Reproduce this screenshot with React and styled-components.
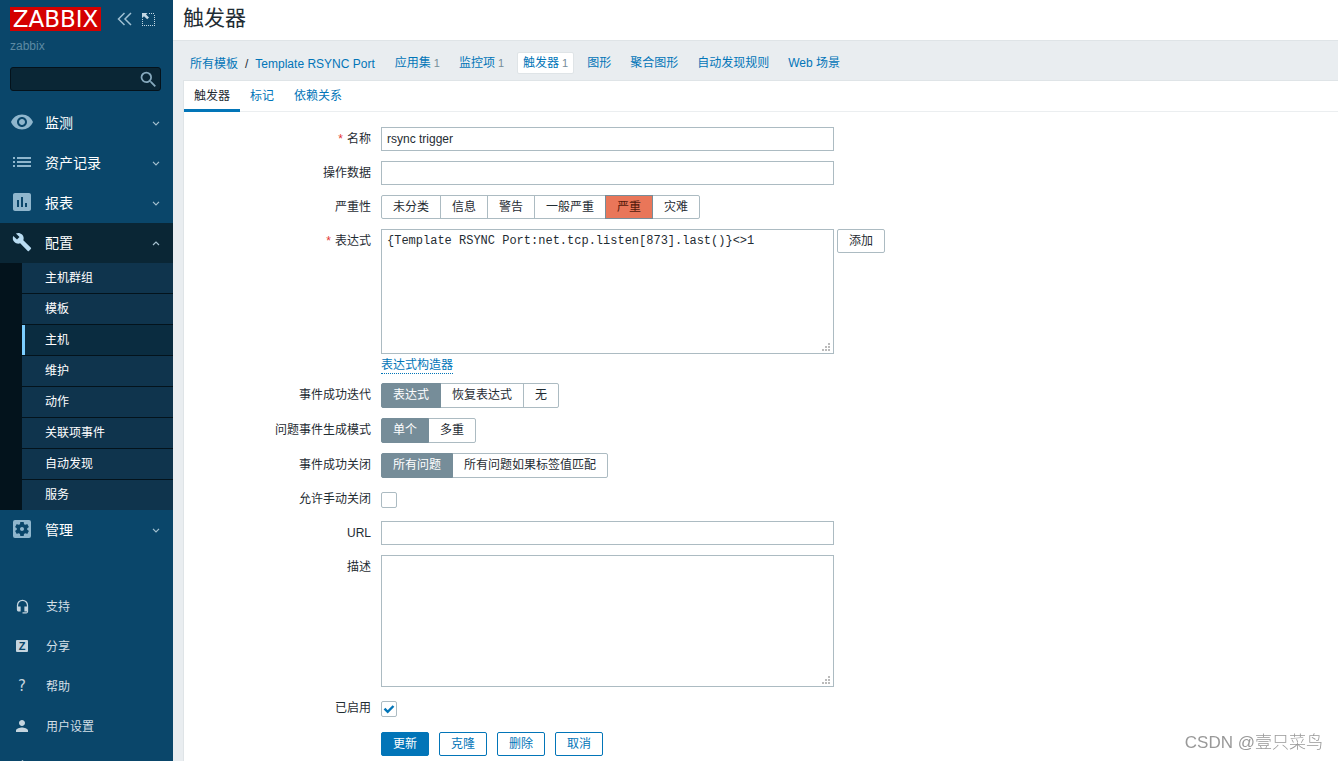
// App.jsx
import React, { useState } from 'react';
import styled, { createGlobalStyle } from 'styled-components';
import {
  MdAssessment,
  MdBuild,
  MdHeadsetMic,
  MdPerson,
  MdPowerSettingsNew,
  MdSearch,
  MdSettingsApplications,
  MdVisibility,
} from 'react-icons/md';

const GlobalStyle = createGlobalStyle`
  *, *::before, *::after {
    box-sizing: border-box;
  }

  body {
    margin: 0;
    background: #e9edf0;
    color: #1f2c33;
    font: 12px/16px "Liberation Sans", "Noto Sans CJK SC", sans-serif;
  }

  button, input, textarea {
    font: inherit;
    color: inherit;
  }

  a {
    color: #0275b8;
    text-decoration: none;
  }
`;

const Page = styled.div`
  display: flex;
  min-height: 100vh;
`;

/* Sidebar */

const Sidebar = styled.aside`
  position: sticky;
  top: 0;
  flex: 0 0 173px;
  height: 100vh;
  overflow: hidden;
  background: #0a466a;
`;

const SidebarHeader = styled.div`
  display: flex;
  align-items: center;
  padding: 7px 0 0 10px;
`;

const Logo = styled.a`
  flex: none;
  width: 91px;
  height: 24px;
  margin-right: 16px;
  background: #d40000;
  color: #fff;
  font: 23px/24px "DejaVu Sans", sans-serif;
  text-align: center;
`;

const HeaderButton = styled.button`
  display: flex;
  padding: 0;
  margin-right: 10px;
  border: none;
  background: none;
  color: #9fc0d3;
  cursor: pointer;
`;

const ServerName = styled.div`
  padding: 7px 10px 13px;
  color: #5d8aa3;
`;

const SearchForm = styled.form`
  display: flex;
  align-items: center;
  height: 24px;
  margin: 0 12px 12px 10px;
  border: 1px solid #04121b;
  border-radius: 3px;
  background: #0a2635;
`;

const SearchInput = styled.input`
  flex: 1;
  min-width: 0;
  padding: 0 5px;
  border: none;
  outline: none;
  background: transparent;
  color: #fff;
`;

const SearchButton = styled.button`
  display: flex;
  padding: 0 1px 0 0;
  border: none;
  background: none;
  color: #86a9bd;
  cursor: pointer;
`;

const MenuLink = styled.a`
  display: flex;
  align-items: center;
  gap: ${(props) => (props.$small ? '12px' : '11px')};
  height: 40px;
  padding: ${(props) => (props.$small ? '2px' : '0')} 13px 0 10px;
  background: ${(props) => (props.$open ? '#0a2635' : 'transparent')};
  color: ${(props) => (props.$small ? '#d3dfe6' : '#fff')};
  font-size: ${(props) => (props.$small ? '12px' : '14px')};
`;

const MenuIcon = styled.span`
  display: flex;
  justify-content: center;
  width: 24px;
  padding-bottom: 2px;
  color: ${(props) => (props.$bright ? '#b9dcf2' : '#8fb6cd')};
`;

const MenuText = styled.span`
  flex: 1;
`;

const SubMenu = styled.ul`
  margin: 0;
  padding: 0 0 0 22px;
  list-style: none;
  background: #03131c;
`;

const SubMenuLink = styled.a`
  display: block;
  height: 30px;
  padding-left: 20px;
  border-left: 3px solid ${(props) => (props.$active ? '#7cceff' : 'transparent')};
  background: ${(props) => (props.$active ? '#0a2c40' : '#0f344d')};
  color: #fff;
  line-height: 30px;

  li + li > & {
    margin-top: 1px;
  }
`;

const UserMenu = styled.nav`
  padding-top: 36px;
`;

const SmallIcon = styled(MenuIcon)`
  color: #c5d5df;
`;

const ShareBadge = styled.span`
  width: 12px;
  height: 12px;
  border-radius: 1px;
  background: #c5d5df;
  color: #0a466a;
  font: bold 11px/12px "Liberation Sans", sans-serif;
  text-align: center;
`;

const HelpMark = styled.span`
  font: 15px/16px "DejaVu Sans", sans-serif;
`;

/* Content */

const Main = styled.main`
  display: flex;
  flex: 1;
  flex-direction: column;
  min-width: 0;
`;

const PageHeader = styled.header`
  height: 41px;
  padding-left: 10px;
  border-bottom: 1px solid #dfe4e7;
  background: #fff;
`;

const PageTitle = styled.h1`
  margin: 0;
  font-size: 21px;
  font-weight: normal;
  line-height: 36px;
`;

const Breadcrumbs = styled.nav`
  display: flex;
  align-items: center;
  flex-wrap: wrap;
  gap: 7px;
  min-height: 39px;
  padding: 4px 10px 0 11px;
`;

const Crumb = styled.a`
  padding: 1px 5px;
  border: 1px solid ${(props) => (props.$active ? '#dfe4e7' : 'transparent')};
  border-radius: 2px;
  background: ${(props) => (props.$active ? '#fff' : 'transparent')};
  line-height: 18px;
`;

const Path = styled.span`
  display: flex;
  align-items: center;
  padding: 2px 7px 0 6px;
  gap: 7px;
`;

const Count = styled.span`
  margin-left: 3px;
  color: #768d99;
  font-size: 11px;
`;

const Card = styled.section`
  flex: 1;
  margin-left: 10px;
  border: 1px solid #dfe4e7;
  border-width: 1px 0 0 1px;
  background: #fff;
`;

const Tabs = styled.div`
  display: flex;
  height: 31px;
  border-bottom: 1px solid #ebeef0;
`;

const Tab = styled.button`
  height: 31px;
  padding: 2px 10px 0;
  border: none;
  border-bottom: 3px solid ${(props) => (props.$active ? '#0275b8' : 'transparent')};
  background: none;
  color: ${(props) => (props.$active ? '#1f2c33' : '#0275b8')};
  line-height: 26px;
  cursor: pointer;
`;

const Form = styled.form`
  display: flex;
  flex-direction: column;
  gap: 10px;
  padding: 15px 0 5px;
`;

const Row = styled.div`
  display: grid;
  grid-template-columns: 187px 1fr;
  gap: 10px;
`;

const FieldLabel = styled.label`
  line-height: 24px;
  text-align: right;
`;

const CheckLabel = styled(FieldLabel)`
  line-height: 23px;
`;

const Required = styled.span`
  margin-right: 4px;
  color: #e33734;
`;

const TextInput = styled.input`
  width: 453px;
  max-width: 100%;
  height: 24px;
  padding: 0 5px;
  border: 1px solid #acbbc2;
  outline: none;
  background: #fff;
`;

const AreaBox = styled.div`
  position: relative;
  width: 453px;
  max-width: 100%;
`;

const Area = styled.textarea`
  display: block;
  width: 100%;
  height: ${(props) => (props.$mono ? '125px' : '132px')};
  padding: 4px 5px;
  border: 1px solid #acbbc2;
  outline: none;
  background: #fff;
  font-family: ${(props) => (props.$mono ? '"Liberation Mono", monospace' : 'inherit')};
  line-height: 14px;
  resize: none;
`;

const Grip = styled.svg`
  position: absolute;
  right: 4px;
  bottom: 3px;
  pointer-events: none;
`;

const Inline = styled.div`
  display: flex;
  align-items: flex-start;
  gap: 3px;
`;

const BuilderLine = styled.div`
  height: 19px;
  padding-top: 3px;
`;

const DottedLink = styled.a`
  display: inline-block;
  border-bottom: 1px dotted #0275b8;
  line-height: 15px;
`;

const Segments = styled.div`
  display: flex;
`;

const Segment = styled.label`
  height: ${(props) => (props.$severity ? '24px' : '25px')};
  padding: 0 11px;
  border: 1px solid #acbbc2;
  line-height: 22px;
  white-space: nowrap;
  cursor: pointer;

  & + & {
    margin-left: -1px;
  }

  &:first-child {
    border-radius: 2px 0 0 2px;
  }

  &:last-child {
    border-radius: 0 2px 2px 0;
  }

  &:has(input:checked) {
    z-index: 1;
    border-color: #768d99;
    background: ${(props) => (props.$severity ? '#e97659' : '#768d99')};
    color: ${(props) => (props.$severity ? '#52190b' : '#fff')};
  }
`;

const HiddenRadio = styled.input`
  position: absolute;
  opacity: 0;
  pointer-events: none;
`;

const CheckBox = styled.span`
  display: grid;
  width: 16px;
  height: 23px;
  align-items: center;
`;

const CheckInput = styled.input`
  grid-area: 1 / 1;
  width: 16px;
  height: 16px;
  margin: 0;
  border: 1px solid #acbbc2;
  border-radius: 2px;
  background: #fff;
  appearance: none;

  & + svg {
    grid-area: 1 / 1;
    z-index: 1;
    visibility: hidden;
    pointer-events: none;
  }

  &:checked + svg {
    visibility: visible;
  }
`;

const Button = styled.button`
  height: 24px;
  padding: 0 11px;
  border: 1px solid ${(props) => (props.$plain ? '#acbbc2' : '#0275b8')};
  border-radius: 2px;
  background: ${(props) => (props.$primary ? '#0275b8' : '#fff')};
  color: ${(props) => (props.$primary ? '#fff' : props.$plain ? '#1f2c33' : '#0275b8')};
  line-height: 22px;
  white-space: nowrap;
  cursor: pointer;
`;

const Actions = styled.div`
  display: flex;
  gap: 10px;
  padding-top: 2px;
`;

const Watermark = styled.div`
  position: fixed;
  right: 15px;
  bottom: 6px;
  color: #999;
  font-size: 17px;
  font-weight: 300;
  line-height: 24px;
  pointer-events: none;
`;

const ListIcon = () => (
  <svg width="18" height="12" fill="currentColor">
    {[1, 5, 9].map((y) => (
      <g key={y}>
        <rect x="0" y={y} width="2" height="2" />
        <rect x="4" y={y} width="14" height="2" />
      </g>
    ))}
  </svg>
);

const Chevron = ({ up }) => (
  <svg width="8" height="6" fill="none" stroke="#a5c1d0" strokeWidth="1.2">
    <path d={up ? 'M1 5 L4 2 L7 5' : 'M1 1.8 L4 4.8 L7 1.8'} />
  </svg>
);

const mainMenu = [
  { text: '监测', icon: <MdVisibility size={24} /> },
  { text: '资产记录', icon: <ListIcon /> },
  { text: '报表', icon: <MdAssessment size={24} /> },
  {
    text: '配置',
    icon: <MdBuild size={20} />,
    items: ['主机群组', '模板', '主机', '维护', '动作', '关联项事件', '自动发现', '服务'],
  },
  { text: '管理', icon: <MdSettingsApplications size={24} /> },
];

const userMenu = [
  { text: '支持', icon: <MdHeadsetMic size={15} /> },
  { text: '分享', icon: <ShareBadge>Z</ShareBadge> },
  { text: '帮助', icon: <HelpMark>?</HelpMark> },
  { text: '用户设置', icon: <MdPerson size={18} /> },
];

const crumbs = [
  { text: '应用集', count: 1 },
  { text: '监控项', count: 1 },
  { text: '触发器', count: 1, active: true },
  { text: '图形' },
  { text: '聚合图形' },
  { text: '自动发现规则' },
  { text: 'Web 场景' },
];

const SegmentedField = ({ label, name, options, initial, severity }) => {
  const [value, setValue] = useState(initial);

  return (
    <Row>
      <FieldLabel as="span" id={`${name}-label`}>{label}</FieldLabel>
      <Segments role="radiogroup" aria-labelledby={`${name}-label`}>
        {options.map((option) => (
          <Segment key={option} $severity={severity}>
            <HiddenRadio
              type="radio"
              name={name}
              checked={value === option}
              onChange={() => setValue(option)}
            />
            {option}
          </Segment>
        ))}
      </Segments>
    </Row>
  );
};

const CheckField = ({ label, id, checked }) => (
  <Row>
    <CheckLabel htmlFor={id}>{label}</CheckLabel>
    <CheckBox>
      <CheckInput type="checkbox" id={id} defaultChecked={checked} />
      <svg width="16" height="16" fill="none" stroke="#0275b8" strokeWidth="2.4">
        <path d="M3.5 7.6 L6.7 10.8 L12.5 5" />
      </svg>
    </CheckBox>
  </Row>
);

const TextArea = (props) => (
  <AreaBox>
    <Area {...props} />
    <Grip width="8" height="8" fill="#bbb">
      <rect x="6" y="0" width="2" height="2" />
      <rect x="3" y="3" width="2" height="2" />
      <rect x="6" y="3" width="2" height="2" />
      <rect x="0" y="6" width="2" height="2" />
      <rect x="3" y="6" width="2" height="2" />
      <rect x="6" y="6" width="2" height="2" />
    </Grip>
  </AreaBox>
);

const SideNavigation = () => (
  <Sidebar>
    <SidebarHeader>
      <Logo href="#">ZABBIX</Logo>
      <HeaderButton type="button" aria-label="收起侧边栏">
        <svg width="15" height="14" fill="none" stroke="currentColor" strokeWidth="1.5">
          <path d="M7.5 1 L1.5 7 L7.5 13 M14 1 L8 7 L14 13" />
        </svg>
      </HeaderButton>
      <HeaderButton type="button" aria-label="隐藏侧边栏">
        <svg width="13" height="13" fill="none" stroke="#c3d8e4">
          <path d="M7 .5 H13 M12.5 2 V13 M.5 6 V13 M2 12.5 H12" strokeDasharray="1 1" />
          <path d="M0 0 H5.5 L4 1.5 L7 4.5 L5.2 6.2 L2 3.2 L0 5.2 Z" fill="#c3d8e4" stroke="none" />
        </svg>
      </HeaderButton>
    </SidebarHeader>
    <ServerName>zabbix</ServerName>
    <SearchForm role="search">
      <SearchInput type="text" aria-label="搜索" />
      <SearchButton type="button" aria-label="搜索">
        <MdSearch size={21} />
      </SearchButton>
    </SearchForm>
    <nav>
      {mainMenu.map(({ text, icon, items }) => (
        <React.Fragment key={text}>
          <MenuLink href="#" $open={Boolean(items)}>
            <MenuIcon $bright={Boolean(items)}>{icon}</MenuIcon>
            <MenuText>{text}</MenuText>
            <Chevron up={Boolean(items)} />
          </MenuLink>
          {items && (
            <SubMenu>
              {items.map((item) => (
                <li key={item}>
                  <SubMenuLink href="#" $active={item === '主机'}>{item}</SubMenuLink>
                </li>
              ))}
            </SubMenu>
          )}
        </React.Fragment>
      ))}
    </nav>
    <UserMenu>
      {userMenu.map(({ text, icon }) => (
        <MenuLink key={text} href="#" $small>
          <SmallIcon>{icon}</SmallIcon>
          <MenuText>{text}</MenuText>
        </MenuLink>
      ))}
      <MenuLink href="#" $small aria-label="退出">
        <SmallIcon><MdPowerSettingsNew size={17} /></SmallIcon>
      </MenuLink>
    </UserMenu>
  </Sidebar>
);

const App = () => {
  const [tab, setTab] = useState('触发器');

  return (
    <Page>
      <GlobalStyle />
      <SideNavigation />
      <Main>
        <PageHeader>
          <PageTitle>触发器</PageTitle>
        </PageHeader>
        <Breadcrumbs>
          <Path>
            <a href="#">所有模板</a>
            <span>/</span>
            <a href="#">Template RSYNC Port</a>
          </Path>
          {crumbs.map(({ text, count, active }) => (
            <Crumb key={text} href="#" $active={active}>
              {text}
              {count && <Count>{count}</Count>}
            </Crumb>
          ))}
        </Breadcrumbs>
        <Card>
          <Tabs role="tablist">
            {['触发器', '标记', '依赖关系'].map((name) => (
              <Tab
                key={name}
                type="button"
                role="tab"
                aria-selected={tab === name}
                $active={tab === name}
                onClick={() => setTab(name)}
              >
                {name}
              </Tab>
            ))}
          </Tabs>
          <Form>
            <Row>
              <FieldLabel htmlFor="name"><Required>*</Required>名称</FieldLabel>
              <TextInput type="text" id="name" defaultValue="rsync trigger" />
            </Row>
            <Row>
              <FieldLabel htmlFor="opdata">操作数据</FieldLabel>
              <TextInput type="text" id="opdata" />
            </Row>
            <SegmentedField
              label="严重性"
              name="severity"
              options={['未分类', '信息', '警告', '一般严重', '严重', '灾难']}
              initial="严重"
              severity
            />
            <Row>
              <FieldLabel htmlFor="expression"><Required>*</Required>表达式</FieldLabel>
              <div>
                <Inline>
                  <TextArea
                    id="expression"
                    $mono
                    spellCheck={false}
                    defaultValue="{Template RSYNC Port:net.tcp.listen[873].last()}<>1"
                  />
                  <Button type="button" $plain>添加</Button>
                </Inline>
                <BuilderLine>
                  <DottedLink href="#">表达式构造器</DottedLink>
                </BuilderLine>
              </div>
            </Row>
            <SegmentedField
              label="事件成功迭代"
              name="recovery_mode"
              options={['表达式', '恢复表达式', '无']}
              initial="表达式"
            />
            <SegmentedField
              label="问题事件生成模式"
              name="type"
              options={['单个', '多重']}
              initial="单个"
            />
            <SegmentedField
              label="事件成功关闭"
              name="correlation_mode"
              options={['所有问题', '所有问题如果标签值匹配']}
              initial="所有问题"
            />
            <CheckField label="允许手动关闭" id="manual_close" />
            <Row>
              <FieldLabel htmlFor="url">URL</FieldLabel>
              <TextInput type="text" id="url" />
            </Row>
            <Row>
              <FieldLabel htmlFor="description">描述</FieldLabel>
              <TextArea id="description" />
            </Row>
            <CheckField label="已启用" id="status" checked />
            <Row>
              <span />
              <Actions>
                <Button type="button" $primary>更新</Button>
                <Button type="button">克隆</Button>
                <Button type="button">删除</Button>
                <Button type="button">取消</Button>
              </Actions>
            </Row>
          </Form>
        </Card>
      </Main>
      <Watermark>CSDN @壹只菜鸟</Watermark>
    </Page>
  );
};

export default App;
